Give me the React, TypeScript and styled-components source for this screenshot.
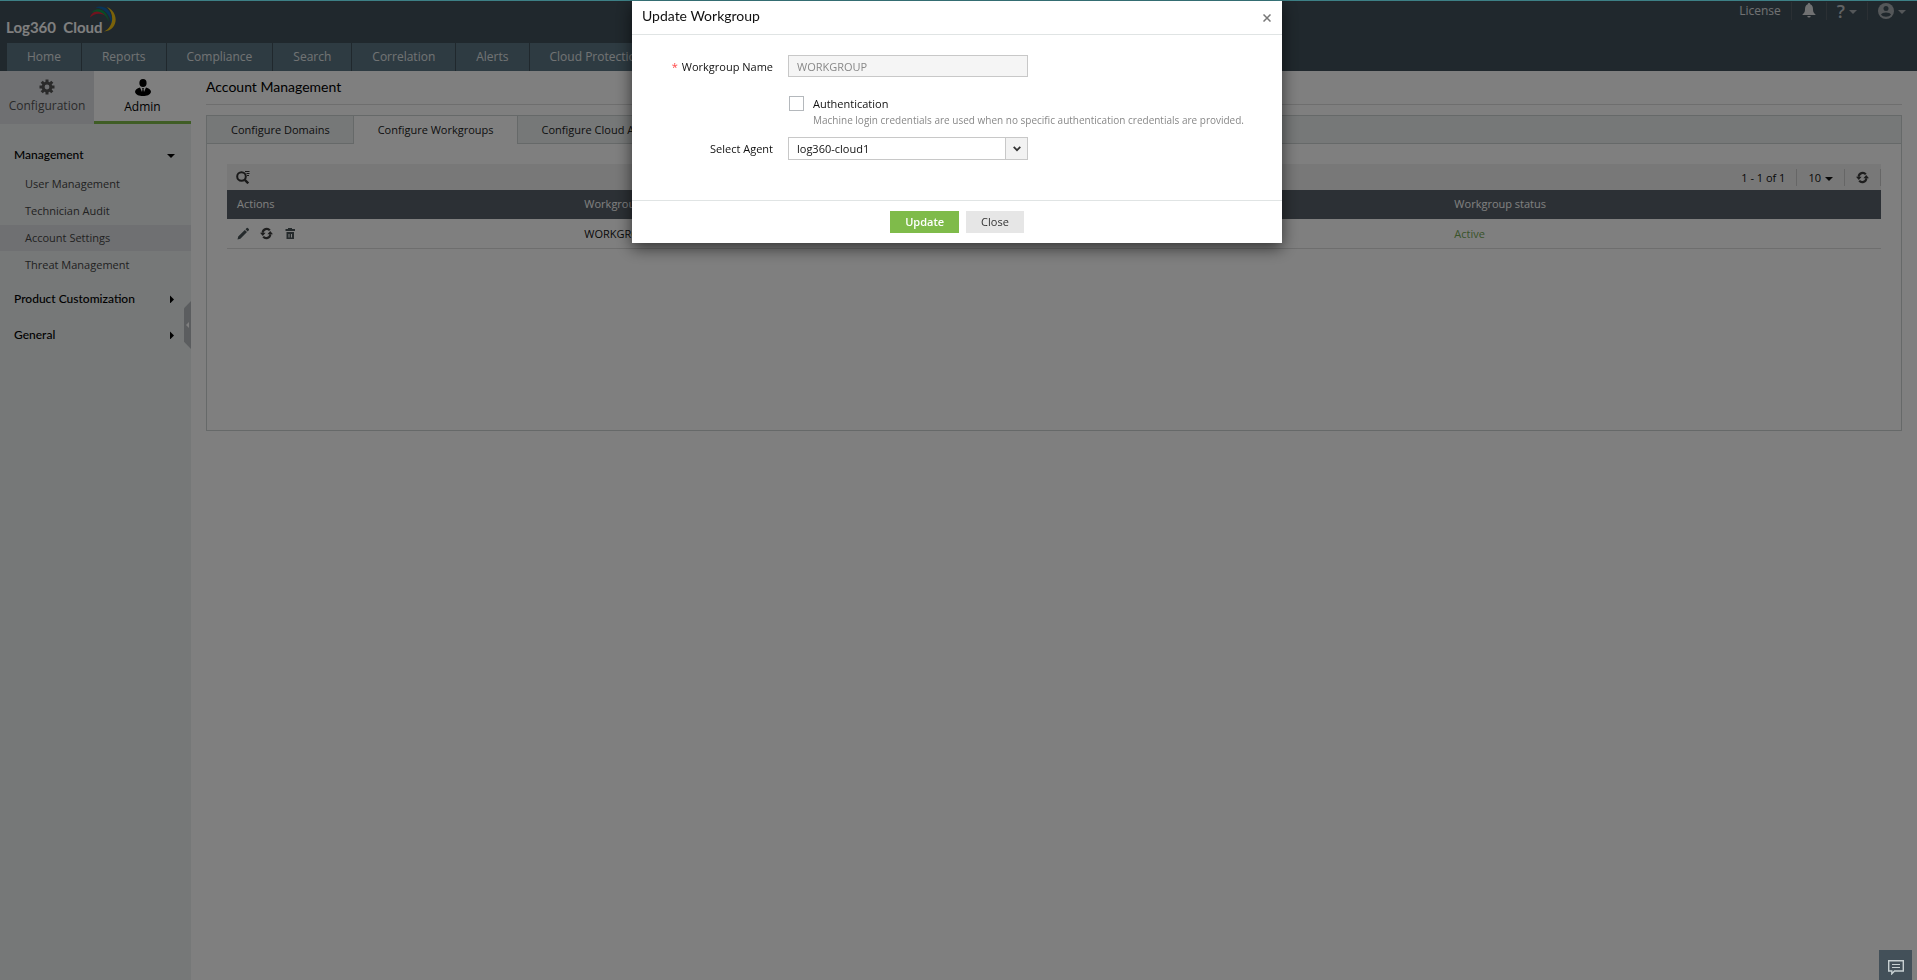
import React from "react";
import styled, { createGlobalStyle } from "styled-components";

const sans = `"Open Sans", "Noto Sans", sans-serif`;
const lato = `Lato, "Open Sans", sans-serif`;

const Global = createGlobalStyle`
  * { box-sizing: border-box; }
  html, body { margin: 0; padding: 0; }
  body { background: #fff; color: #111; font: 12px/16px ${sans}; }
  button, input, select { font: inherit; color: inherit; }
  button { cursor: pointer; border: 0; background: none; padding: 0; }
  a { color: inherit; text-decoration: none; }
  h1, h2, ul { margin: 0; padding: 0; list-style: none; }
`;

const Page = styled.div`
  display: flex;
  flex-direction: column;
  min-height: 100vh;
`;

const Header = styled.header`
  display: flex;
  flex-direction: column;
  justify-content: space-between;
  height: 71px;
  background: #40505a;
`;

const HeaderTop = styled.div`
  display: flex;
  justify-content: space-between;
  align-items: flex-start;
`;

const Brand = styled.a`
  display: flex;
  padding: 5px 0 0 6px;
`;

const BrandName = styled.span`
  margin-top: 13px;
  font: 700 15px/18px ${lato};
  color: #fff;
  white-space: pre;
`;

const BrandArc = styled.svg`
  width: 27px;
  height: 28px;
  margin-left: -13px;
`;

const UserTools = styled.div`
  display: flex;
  align-items: center;
  height: 20px;
  padding: 1px 11px 0 0;
  color: #e0e3e5;
`;

const toolLayout = `
  display: flex;
  align-items: center;
  gap: 4px;
  height: 18px;
`;

const ToolLink = styled.a`
  ${toolLayout}
`;

const ToolButton = styled.button<{ $muted?: boolean }>`
  ${toolLayout}
  margin-left: 10px;
  padding-left: 10px;
  border-left: 1px solid #566069;
  color: ${(p) => (p.$muted ? "#a8aeb2" : "#e0e3e5")};
`;

const HelpMark = styled.span`
  color: #c0c5c8;
  font-size: 18px;
  font-weight: 600;
`;

const Nav = styled.nav`
  display: flex;
  padding-left: 7px;
`;

const NavItem = styled.a`
  height: 28px;
  padding: 0 20px;
  border-right: 1px solid #40505a;
  background: #5c7684;
  color: #e2e6e8;
  line-height: 27px;
`;

const Body = styled.div`
  display: flex;
  flex: 1;
`;

const Sidebar = styled.aside`
  position: relative;
  flex: none;
  width: 191px;
  background: #ecf0f0;
`;

const SideTabs = styled.div`
  display: flex;
  height: 53px;
`;

const SideTab = styled.button<{ $active?: boolean }>`
  display: flex;
  flex-direction: column;
  align-items: center;
  gap: 3px;
  width: ${(p) => (p.$active ? 97 : 94)}px;
  padding-top: 8px;
  background: ${(p) => (p.$active ? "#fff" : "#dfe1e5")};
  border-bottom: 3px solid ${(p) => (p.$active ? "#7fbb4a" : "#dfe1e5")};
  color: ${(p) => (p.$active ? "#000" : "#555")};
`;

const Menu = styled.nav`
  padding-top: 16px;
`;

const MenuGroup = styled.button`
  display: flex;
  justify-content: space-between;
  align-items: center;
  width: 100%;
  height: 30px;
  padding: 0 16px 0 14px;
  color: #000;
  font: 500 12px/16px ${lato};

  & + & { margin-top: 6px; }
`;

const SubMenu = styled.ul`
  padding: 1px 0 5px;
`;

const SubItem = styled.a<{ $active?: boolean }>`
  display: block;
  height: 26px;
  margin-bottom: 1px;
  padding-left: 25px;
  background: ${(p) => (p.$active ? "#dfe1e5" : "transparent")};
  color: #444;
  font-size: 11px;
  line-height: 26px;
`;

const Collapse = styled.button`
  position: absolute;
  top: 230px;
  right: 0;
  display: flex;
  align-items: center;
  justify-content: center;
  width: 7px;
  height: 48px;
  background: #b6bbbf;
  clip-path: polygon(0 15%, 100% 0, 100% 100%, 0 85%);
`;

const Main = styled.main`
  flex: 1;
  min-width: 0;
  padding: 0 15px;
`;

const PageTitle = styled.h1`
  height: 34px;
  border-bottom: 1px solid #ddd;
  color: #000;
  font: 400 14px/32px ${lato};
`;

const Panel = styled.section`
  min-height: 316px;
  margin-top: 10px;
  border: 1px solid #ccd2d2;
`;

const Tabs = styled.div`
  display: flex;
  height: 28px;
  background: #ecf0f0;
  box-shadow: inset 0 -1px #ccd2d2;
`;

const Tab = styled.button<{ $active?: boolean }>`
  padding: 0 23px 0 24px;
  border-right: 1px solid #ccd2d2;
  background: ${(p) => (p.$active ? "#fff" : "transparent")};
  color: #222;
  font-size: 11px;
  line-height: 26px;
`;

const Grid = styled.div`
  margin: 20px 20px 0;
`;

const GridBar = styled.div`
  display: flex;
  justify-content: space-between;
  align-items: center;
  height: 26px;
  padding-left: 9px;
  background: #f0f0f0;

  svg { display: block; }
`;

const Pager = styled.div`
  display: flex;
  align-items: center;
  padding-top: 1px;
  font-size: 11px;
`;

const pagerCell = `
  display: flex;
  align-items: center;
  gap: 4px;
  height: 17px;
  padding: 0 11px;
  border-right: 1px solid #ccc;
`;

const PagerText = styled.span`
  ${pagerCell}
`;

const PagerButton = styled.button`
  ${pagerCell}
`;

const Table = styled.table`
  width: 100%;
  border-spacing: 0;
  table-layout: fixed;
  font-size: 11px;
  text-align: left;

  th {
    height: 29px;
    padding: 0 10px 1px;
    background: #58616a;
    color: #fff;
    font-weight: 400;
  }
  th:first-child { width: 21%; }
  th:last-child { width: 26.4%; }
  td {
    height: 30px;
    padding: 0 10px;
    border-bottom: 1px solid #ddd;
  }
`;

const RowActions = styled.div`
  display: flex;
  align-items: center;
  gap: 11px;
`;

const IconButton = styled.button`
  display: flex;
  color: #4a5558;
`;

const Status = styled.span`
  color: #74a855;
`;

const Backdrop = styled.div`
  position: fixed;
  inset: 0;
  display: flex;
  justify-content: center;
  align-items: flex-start;
  border-top: 1px solid #3d8086;
  background: rgba(0, 0, 0, 0.5);
  background-clip: padding-box;
`;

const Dialog = styled.div`
  width: 650px;
  margin-right: 3px;
  background: #fff;
  box-shadow: 0 5px 15px rgba(0, 0, 0, 0.6);
`;

const DialogHead = styled.div`
  display: flex;
  justify-content: space-between;
  align-items: center;
  height: 34px;
  padding: 0 11px 0 10px;
  border-bottom: 1px solid #e0e4e4;

  h2 { font: 400 14px/20px ${lato}; color: #111; padding-bottom: 3px; }
`;

const CloseIcon = styled.button`
  display: flex;
  color: #777;
`;

const Form = styled.form`
  height: 165px;
  padding-top: 20px;
`;

const Field = styled.div<{ $height: number }>`
  display: grid;
  grid-template-columns: 141px 1fr;
  column-gap: 15px;
  align-items: start;
  height: ${(p) => p.$height}px;
  font-size: 11px;

  > label:first-child {
    text-align: right;
    line-height: 24px;
  }
`;

const Required = styled.span`
  margin-right: 1px;
  color: #f44;
`;

const TextBox = styled.input`
  width: 240px;
  height: 22px;
  padding: 0 8px;
  border: 1px solid #c8c8c8;
  border-radius: 0;
  background: #f5f5f5;
  color: #888;
`;

const Check = styled.div`
  grid-column: 2;
  display: grid;
  grid-template-columns: 15px 1fr;
  column-gap: 9px;
  padding-left: 1px;
  line-height: 16px;

  input {
    appearance: none;
    width: 15px;
    height: 15px;
    margin: 0;
    border: 1px solid #b4b8bc;
    background: #fff;
  }
`;

const Hint = styled.span`
  grid-column: 2;
  color: #888;
  font-size: 10px;
`;

const SelectWrap = styled.div`
  display: flex;
  position: relative;
  width: 240px;

  select {
    appearance: none;
    width: 100%;
    height: 23px;
    padding: 0 8px;
    border: 1px solid #c8c8c8;
    border-radius: 0;
    background: #fff;
  }
`;

const SelectArrow = styled.span`
  position: absolute;
  top: 1px;
  right: 1px;
  bottom: 1px;
  display: flex;
  align-items: center;
  justify-content: center;
  width: 22px;
  border-left: 1px solid #c8c8c8;
  background: #f2f2f2;
  pointer-events: none;
`;

const DialogFoot = styled.div`
  display: flex;
  justify-content: center;
  gap: 7px;
  height: 43px;
  padding-top: 10px;
  border-top: 1px solid #e0e4e4;
`;

const Action = styled.button<{ $primary?: boolean }>`
  height: 22px;
  padding: 0 15px;
  background: ${(p) => (p.$primary ? "#7fbb4a" : "#e6e6e6")};
  color: ${(p) => (p.$primary ? "#fff" : "#333")};
  font-size: 11px;
  font-weight: ${(p) => (p.$primary ? 600 : 400)};
`;

const Chat = styled.button`
  position: fixed;
  right: 5px;
  bottom: 0;
  display: flex;
  align-items: center;
  justify-content: center;
  width: 33px;
  height: 30px;
  padding-top: 4px;
  background: #435059;
`;

const Caret = ({ right }: { right?: boolean }) => (
  <svg width="8" height="8" viewBox="0 0 8 8" fill="currentColor" aria-hidden="true">
    <path d={right ? "M3 0.500 7 4.500 3 8.500Z" : "M0 3H8L4 7Z"} />
  </svg>
);

const Refresh = () => (
  <svg width="13" height="13" viewBox="0 0 13 13" fill="none" aria-hidden="true">
    <path d="M2.700 5.800A4 4 0 0 1 9.800 3.400M10.300 7.200A4 4 0 0 1 3.200 9.600" stroke="#3c3c3c" strokeWidth="2.200" />
    <path d="M0 5.800H5.600L2.800 9ZM7.400 7.200H13L10.200 4Z" fill="#3c3c3c" />
  </svg>
);

const Pencil = () => (
  <svg width="12" height="13" viewBox="0 0 12 13" fill="currentColor" aria-hidden="true">
    <path d="M0.500 12.500 1.200 9.500 7.800 2.900 10 5.100 3.400 11.700ZM8.500 2.200 9.700 1A.8.8 0 0 1 10.800 1L11.800 2A.8.8 0 0 1 11.800 3.200L10.700 4.400Z" />
  </svg>
);

const Trash = () => (
  <svg width="12" height="13" viewBox="0 0 12 13" fill="currentColor" fillRule="evenodd" aria-hidden="true">
    <path d="M4 1H8V2H11V4H1.500V2H4ZM2.500 5H10V12H2.500ZM4.500 7V10.500H5.500V7ZM7 7V10.500H8V7Z" />
  </svg>
);

const SearchFilter = () => (
  <svg width="14" height="14" viewBox="0 0 14 14" fill="none" stroke="#333" aria-hidden="true">
    <circle cx="5.500" cy="6.500" r="4.300" strokeWidth="2" />
    <path d="M8.800 9.800 12.300 13.300" strokeWidth="2.400" />
    <path d="M9 1.500H13.500M10.500 3.500H13.500M11 5.500H13" />
  </svg>
);

const Gear = () => (
  <svg width="16" height="16" viewBox="0 0 16 16" fill="none" stroke="#555" aria-hidden="true">
    <circle cx="8" cy="8" r="3.900" strokeWidth="3" />
    <g strokeWidth="3">
      <path d="M8 .5V4M8 12V15.500M.5 8H4M12 8H15.500M2.700 2.700 5 5M11 11 13.300 13.300M13.300 2.700 11 5M5 11 2.700 13.300" />
    </g>
  </svg>
);

const AdminUser = () => (
  <svg width="16" height="17" viewBox="0 0 16 17" fill="#000" aria-hidden="true">
    <ellipse cx="8" cy="4" rx="3.600" ry="4" />
    <path d="M5 8.500 7 13 7.500 10 7 9H9L8.500 10 9 13 11 8.500C14 9.500 16 10.500 16 13C15 16 12 17 8 17C4 17 1 16 0 13C0 10.500 2 9.500 5 8.500Z" />
  </svg>
);

const navItems = ["Home", "Reports", "Compliance", "Search", "Correlation", "Alerts", "Cloud Protection"];
const adminItems = ["User Management", "Technician Audit", "Account Settings", "Threat Management"];

export default function App() {
  return (
    <>
      <Global />
      <Page>
        <Header>
          <HeaderTop>
            <Brand href="#">
              <BrandName>Log360  Cloud</BrandName>
              <BrandArc viewBox="0 0 27 28" fill="none" aria-hidden="true">
                <path d="M0 12.500C2 5 12 3 17 12C12 7.500 5 7.500 0 12.500Z" fill="#e0263c" />
                <path d="M1.500 8C6 1.500 17 3 19 17C15 7.500 8 4.500 1.500 8Z" fill="#10984c" />
                <path d="M5.500 2.500C14 -1 24 6 21.500 20C20.500 9 14 3.500 5.500 2.500Z" fill="#1268b0" />
                <path d="M17 2C29 7 29 25 14 26.500C23.500 22 25 9 17 2Z" fill="#f4c514" />
              </BrandArc>
            </Brand>
            <UserTools>
              <ToolLink href="#">License</ToolLink>
              <ToolButton aria-label="Notifications">
                <svg width="14" height="15" viewBox="0 0 14 15" fill="currentColor" aria-hidden="true">
                  <path d="M7 0a1.200 1.200 0 0 1 1.200 1.300C10.400 2 11 4 11 6.500C11 9 12 10 13.500 11.500V12H.5v-.5C2 10 3 9 3 6.500C3 4 3.600 2 5.800 1.300A1.200 1.200 0 0 1 7 0ZM5.300 13h3.400a1.700 1.500 0 0 1-3.400 0Z" />
                </svg>
              </ToolButton>
              <ToolButton $muted aria-label="Help"><HelpMark>?</HelpMark><Caret /></ToolButton>
              <ToolButton $muted aria-label="Account">
                <svg width="16" height="16" viewBox="0 0 16 16" aria-hidden="true">
                  <circle cx="8" cy="8" r="8" fill="#a8aeb2" />
                  <circle cx="8" cy="5.500" r="2.500" fill="#40505a" />
                  <path d="M3 11.500C4 8.800 12 8.800 13 11.500C11 14.500 5 14.500 3 11.500Z" fill="#40505a" />
                </svg>
                <Caret />
              </ToolButton>
            </UserTools>
          </HeaderTop>
          <Nav>
            {navItems.map((n) => (
              <NavItem key={n} href="#">{n}</NavItem>
            ))}
          </Nav>
        </Header>
        <Body>
          <Sidebar>
            <SideTabs>
              <SideTab><Gear />Configuration</SideTab>
              <SideTab $active><AdminUser />Admin</SideTab>
            </SideTabs>
            <Menu>
              <MenuGroup>Management<Caret /></MenuGroup>
              <SubMenu>
                {adminItems.map((n) => (
                  <li key={n}>
                    <SubItem href="#" $active={n === "Account Settings"}>{n}</SubItem>
                  </li>
                ))}
              </SubMenu>
              <MenuGroup>Product Customization<Caret right /></MenuGroup>
              <MenuGroup>General<Caret right /></MenuGroup>
            </Menu>
            <Collapse aria-label="Collapse sidebar">
              <svg width="3" height="6" viewBox="0 0 3 6" fill="#fff" aria-hidden="true">
                <path d="M3 0V6L0 3Z" />
              </svg>
            </Collapse>
          </Sidebar>
          <Main>
            <PageTitle>Account Management</PageTitle>
            <Panel>
              <Tabs>
                <Tab>Configure Domains</Tab>
                <Tab $active>Configure Workgroups</Tab>
                <Tab>Configure Cloud Accounts</Tab>
              </Tabs>
              <Grid>
                <GridBar>
                  <IconButton aria-label="Search"><SearchFilter /></IconButton>
                  <Pager>
                    <PagerText>1 - 1 of 1</PagerText>
                    <PagerButton>10<Caret /></PagerButton>
                    <PagerButton aria-label="Refresh"><Refresh /></PagerButton>
                  </Pager>
                </GridBar>
                <Table>
                  <thead>
                    <tr>
                      <th>Actions</th>
                      <th>Workgroup name</th>
                      <th>Workgroup status</th>
                    </tr>
                  </thead>
                  <tbody>
                    <tr>
                      <td>
                        <RowActions>
                          <IconButton aria-label="Edit"><Pencil /></IconButton>
                          <IconButton aria-label="Reload"><Refresh /></IconButton>
                          <IconButton aria-label="Delete"><Trash /></IconButton>
                        </RowActions>
                      </td>
                      <td>WORKGROUP</td>
                      <td><Status>Active</Status></td>
                    </tr>
                  </tbody>
                </Table>
              </Grid>
            </Panel>
          </Main>
        </Body>
      </Page>
      <Backdrop>
        <Dialog role="dialog" aria-labelledby="dialog-title">
          <DialogHead>
            <h2 id="dialog-title">Update Workgroup</h2>
            <CloseIcon aria-label="Close dialog">
              <svg width="8" height="8" viewBox="0 0 8 8" stroke="currentColor" strokeWidth="1.500" aria-hidden="true">
                <path d="M.5.5 7.500 7.500M7.500.5.500 7.500" />
              </svg>
            </CloseIcon>
          </DialogHead>
          <Form>
            <Field $height={41}>
              <label htmlFor="name"><Required>*</Required> Workgroup Name</label>
              <TextBox id="name" defaultValue="WORKGROUP" disabled />
            </Field>
            <Field $height={41}>
              <Check>
                <input id="auth" type="checkbox" />
                <label htmlFor="auth">Authentication</label>
                <Hint>Machine login credentials are used when no specific authentication credentials are provided.</Hint>
              </Check>
            </Field>
            <Field $height={23}>
              <label htmlFor="agent">Select Agent</label>
              <SelectWrap>
                <select id="agent"><option>log360-cloud1</option></select>
                <SelectArrow>
                  <svg width="8" height="6" viewBox="0 0 8 6" fill="none" stroke="#333" strokeWidth="1.700" aria-hidden="true">
                    <path d="M.7.9 4 4.200 7.300.9" />
                  </svg>
                </SelectArrow>
              </SelectWrap>
            </Field>
          </Form>
          <DialogFoot>
            <Action $primary>Update</Action>
            <Action>Close</Action>
          </DialogFoot>
        </Dialog>
      </Backdrop>
      <Chat aria-label="Chat">
        <svg width="16" height="15" viewBox="0 0 16 15" fill="none" stroke="#c8d0d2" aria-hidden="true">
          <path d="M.7.7H15.300V11H6.500L3.800 13.800V11H.7Z" strokeWidth="1.400" />
          <path d="M4 4.500H12M4 7.500H12" />
        </svg>
      </Chat>
    </>
  );
}
